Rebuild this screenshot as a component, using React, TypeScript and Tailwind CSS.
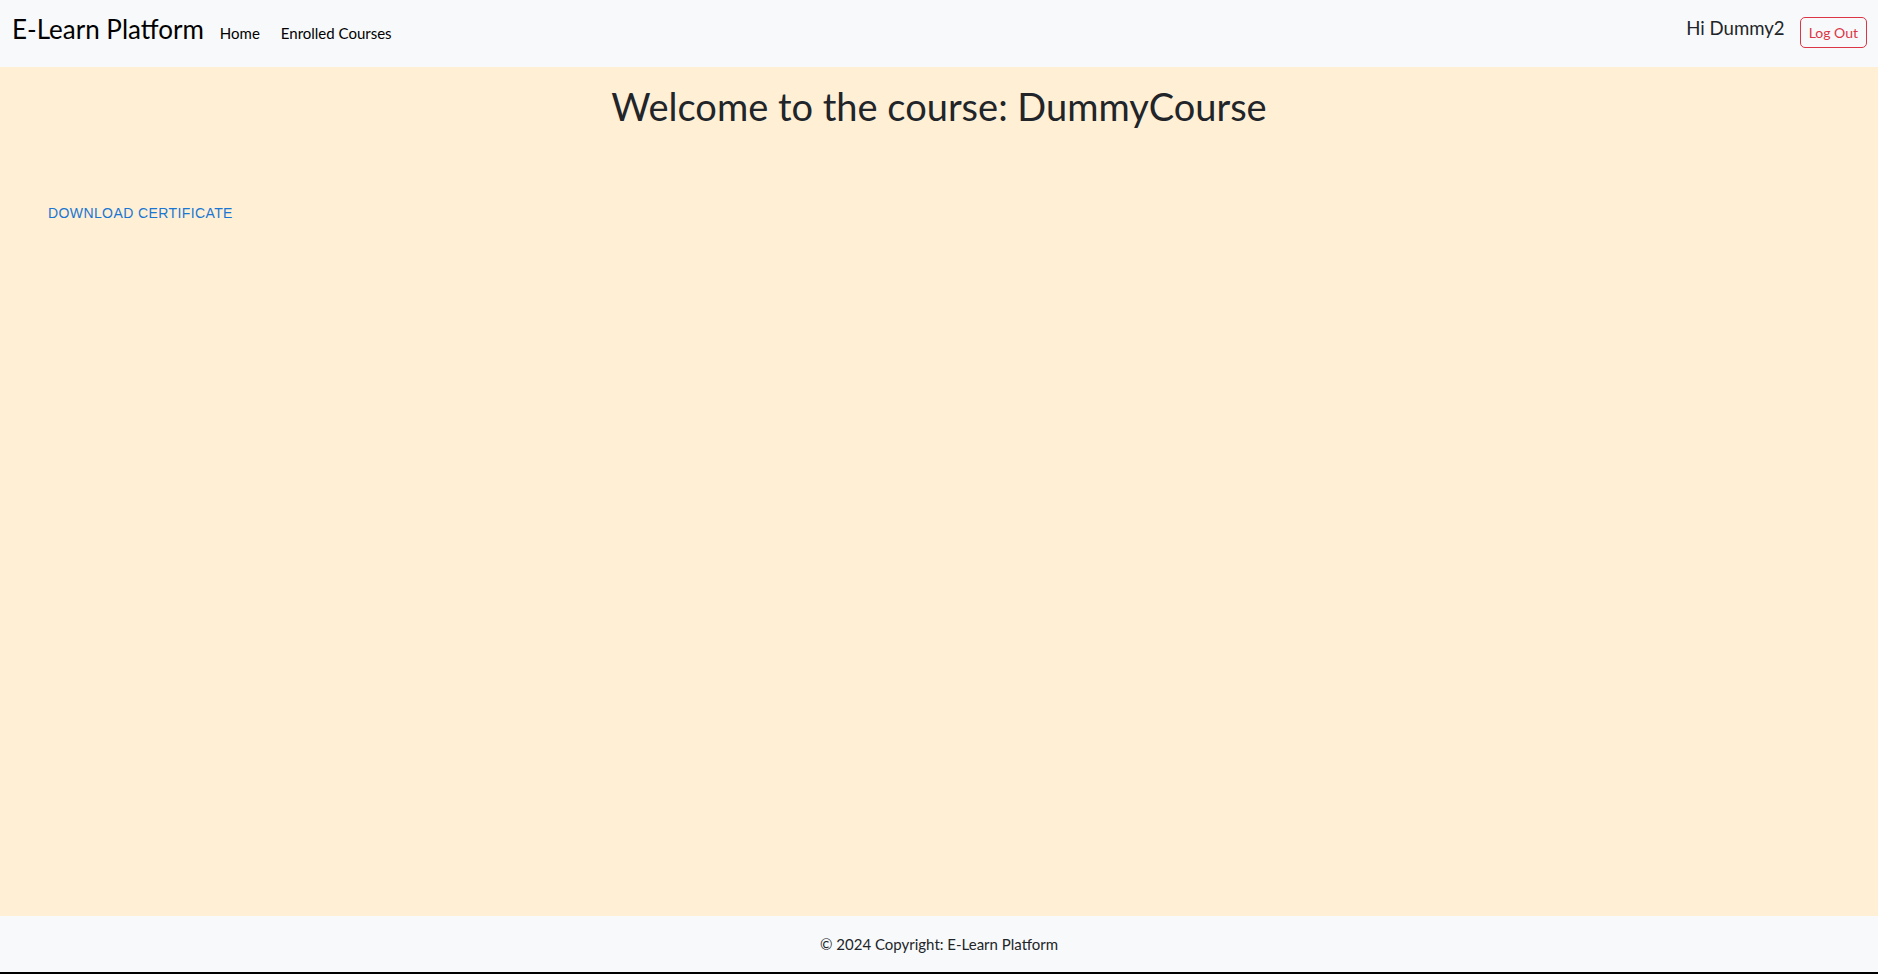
import { FC } from "react";

const sans = "font-['Lato','Open_Sans',sans-serif]";

const Header: FC = () => {
    return (
        <nav className={`h-[67px] bg-[#f8f9fa] flex items-center justify-between pl-[12px] pr-[11px] ${sans}`}>
            <div className="flex items-center">
                <a href="#" className="text-[26px] text-black mr-[16px] leading-none pb-[9px]">E-Learn Platform</a>
                <a href="#" className="text-[15px] text-black mr-[21px]">Home</a>
                <a href="#" className="text-[15px] text-black">Enrolled Courses</a>
            </div>
            <div className="flex items-center pb-[2px]">
                <span className="text-[18.6px] text-[#212529] mr-[15px] pb-[7px]">Hi Dummy2</span>
                <button className="h-[31px] px-[8px] border border-[#dc3545] text-[#dc3545] rounded-[5px] text-[14px]">
                    Log Out
                </button>
            </div>
        </nav>
    );
};

const Footer: FC = () => {
    return (
        <footer className={`h-[58px] bg-[#f8f9fa] border-b-2 border-black flex items-center justify-center text-[15px] text-[#212529] ${sans}`}>
            © 2024 Copyright: E-Learn Platform
        </footer>
    );
};

export default function App() {
    return (
        <div className="min-h-screen flex flex-col">
            <Header />
            <main className="flex-1 bg-[#ffefd5]">
                <h1 className={`text-center text-[38px] text-[#212529] mt-[16px] leading-tight ${sans}`}>
                    Welcome to the course: DummyCourse
                </h1>
                <div className="px-[48px] mt-[69px]">
                    <button className="font-['Liberation_Sans',Arial,sans-serif] text-[14px] tracking-[0.4px] text-[#1976d2] uppercase">
                        Download Certificate
                    </button>
                </div>
            </main>
            <Footer />
        </div>
    );
}
